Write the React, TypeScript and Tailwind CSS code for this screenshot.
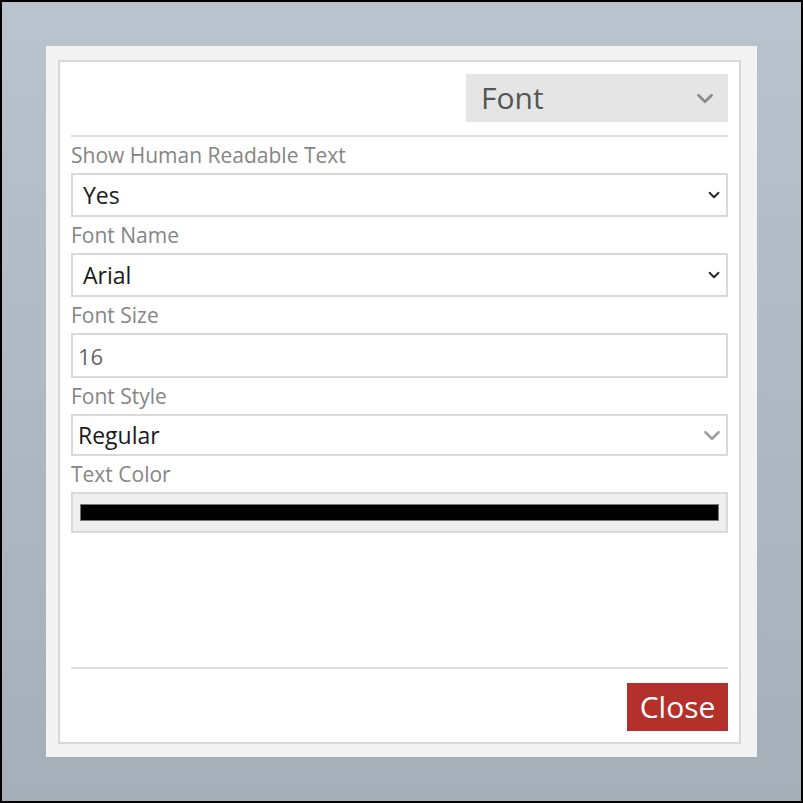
import React from "react";

const font = { fontFamily: '"Open Sans", "Noto Sans", sans-serif' };

function Chevron({ className }: { className?: string }) {
  return (
    <svg viewBox="0 0 16 10" className={className} fill="none" stroke="currentColor" strokeWidth="2.4" strokeLinecap="round" strokeLinejoin="round">
      <path d="M2 2 L8 8 L14 2" />
    </svg>
  );
}

function Label({ children }: { children: React.ReactNode }) {
  return (
    <div className="h-[36px] flex items-center text-[21px] text-[#858585] leading-none">{children}</div>
  );
}

function Select({ value, h }: { value: string; h: string }) {
  return (
    <div className={`${h} border-2 border-[#d9d9d9] bg-white flex items-center justify-between pl-[10px] pr-[4px]`}>
      <span className="text-[23px] text-[#1a1a1a] leading-none">{value}</span>
      <Chevron className="w-[12px] h-[8px] text-[#222] mr-[2px]" />
    </div>
  );
}

export default function App() {
  return (
    <div
      className="w-[803px] h-[803px] border-2 border-black bg-gradient-to-b from-[#b9c3ce] to-[#a5afba] pt-[44px] pl-[44px]"
      style={font}
    >
      <div className="w-[711px] h-[711px] bg-[#f3f3f3] pt-[14px] pl-[12px] pr-[16px] pb-[13px]">
        <div className="h-full border-2 border-[#d8d8d8] bg-white px-[11px] pt-[12px] pb-[11px] flex flex-col">
          <div className="flex justify-end">
            <div className="w-[262px] h-[48px] bg-[#e5e5e5] flex items-center justify-between pl-[15px] pr-[14px]">
              <span className="text-[30px] text-[#555] leading-none">Font</span>
              <Chevron className="w-[18px] h-[11px] text-[#8a8a8a]" />
            </div>
          </div>
          <div className="mt-[13px] h-[2px] bg-[#dddddd]" />
          <Label>Show Human Readable Text</Label>
          <Select value="Yes" h="h-[44px]" />
          <Label>Font Name</Label>
          <Select value="Arial" h="h-[44px]" />
          <Label>Font Size</Label>
          <div className="h-[45px] border-2 border-[#d9d9d9] bg-white flex items-center pl-[5px]">
            <span className="text-[22px] text-[#666] leading-none">16</span>
          </div>
          <Label>Font Style</Label>
          <div className="h-[42px] border-2 border-[#d9d9d9] bg-white flex items-center justify-between pl-[5px] pr-[5px]">
            <span className="text-[23px] text-[#1a1a1a] leading-none">Regular</span>
            <Chevron className="w-[18px] h-[11px] text-[#a0a0a0]" />
          </div>
          <Label>Text Color</Label>
          <div className="h-[41px] border-2 border-[#d9d9d9] bg-[#efefef] flex items-center px-[7px]">
            <div className="w-full h-[17px] bg-black border border-[#777]" />
          </div>
          <div className="flex-1" />
          <div className="h-[2px] bg-[#dddddd]" />
          <div className="flex justify-end mt-[14px]">
            <button className="w-[101px] h-[48px] bg-[#b3302b] text-white text-[30px] leading-none flex items-center justify-center">
              Close
            </button>
          </div>
        </div>
      </div>
    </div>
  );
}
